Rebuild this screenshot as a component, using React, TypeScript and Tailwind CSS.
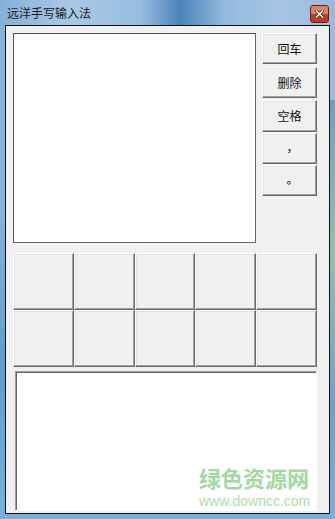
import React from "react";

const CELLS = Array.from({ length: 10 }, (_, i) => i);
const KEYS = ["回车", "删除", "空格", "，", "。"];

function RaisedButton({ label, className }: { label: string; className?: string }) {
  return (
    <div
      className={
        "flex items-center justify-center bg-[#f0f0f0] text-[12px] text-[#111] border border-t-[#fdfdfd] border-l-[#fdfdfd] border-r-[#696969] border-b-[#696969] shadow-[inset_-1px_-1px_0_#a0a0a0,inset_1px_1px_0_#e3e3e3] " +
        (className ?? "")
      }
    >
      {label}
    </div>
  );
}

export default function App() {
  return (
    <div
      className="relative isolate flex h-[519px] w-[335px] flex-col overflow-hidden bg-[#8db5da]"
      style={{ fontFamily: '"Noto Sans CJK SC", "Noto Sans", sans-serif' }}
    >
      {/* aero glass frame */}
      <div className="absolute inset-0 -z-10 flex">
        <div className="w-[140px] bg-linear-to-r from-[#86b0d6] via-[#a9c8e6] to-[#98bde0]" />
        <div className="w-[40px] bg-linear-to-r from-[#98bde0] to-[#4a84b8]" />
        <div className="w-[45px] bg-linear-to-r from-[#4a84b8] to-[#92bade]" />
        <div className="flex-1 bg-linear-to-r from-[#92bade] via-[#a8c6e4] to-[#98bbdd]" />
      </div>
      <div className="absolute inset-x-0 bottom-0 -z-10 h-[300px] bg-linear-to-b from-transparent via-[#5f9cc8] to-[#78b2da]" />
      <div className="absolute right-0 top-[100px] -z-10 h-[300px] w-[6px] bg-linear-to-b from-[#6aa0c8] via-[#8fc0a8] to-[#6aa3cc]" />

      {/* title bar */}
      <div className="flex h-[25px] shrink-0 items-center justify-between pl-[7px] pr-[6px]">
        <span className="text-[12px] leading-none text-[#1a1a1a]">远洋手写输入法</span>
        <div className="mt-[3px] flex h-[18px] w-[19px] flex-col overflow-hidden rounded-[3px] border border-[#5e2218] bg-[#c8402a]">
          <div className="h-[8px] bg-[#e08068]" />
          <div className="flex-1 bg-[#c33a22]" />
          <svg className="absolute ml-[4px] mt-[4px]" width="9" height="8" viewBox="0 0 9 8">
            <path d="M1.5 1 L7.5 7 M7.5 1 L1.5 7" stroke="#3a1a16" strokeWidth="3" strokeLinecap="square" />
            <path d="M1.5 1 L7.5 7 M7.5 1 L1.5 7" stroke="#ffffff" strokeWidth="1.6" strokeLinecap="square" />
          </svg>
        </div>
      </div>

      {/* client area */}
      <div className="mx-[5px] h-[489px] w-[325px] border border-[#111] bg-[#f0f0f0] pl-[7px] pt-[7px]">
        <div className="flex gap-[6px]">
          <div className="h-[210px] w-[243px] border border-[#646464] border-l-[#505050] border-t-[#505050] bg-white" />
          <div className="flex flex-col">
            <RaisedButton label={KEYS[0]} className="h-[31px] w-[55px]" />
            <RaisedButton label={KEYS[1]} className="mt-[3px] h-[31px] w-[55px]" />
            <RaisedButton label={KEYS[2]} className="mt-[2px] h-[32px] w-[55px]" />
            <RaisedButton label={KEYS[3]} className="mt-[1px] h-[31px] w-[55px] pb-[4px] pl-[6px]" />
            <RaisedButton label={KEYS[4]} className="mt-[1px] h-[31px] w-[55px] pb-[4px] pl-[6px]" />
          </div>
        </div>

        <div className="mt-[10px] grid w-[304px] grid-cols-5">
          {CELLS.map((i) => (
            <RaisedButton key={i} label="" className="h-[57px]" />
          ))}
        </div>

        <div className="relative ml-[2px] mt-[4px] h-[140px] w-[302px] border border-[#a0a0a0] border-b-[#fdfdfd] border-r-[#fdfdfd] bg-white shadow-[inset_1px_1px_0_#696969]">
          <div className="absolute left-[183px] top-[95px] flex flex-col items-start">
            <span className="text-[22px] font-bold leading-[20px] text-[#a3d89f]">绿色资源网</span>
            <span
              className="mt-[7px] text-[14px] leading-[14px] text-[#b0dcab]"
              style={{ fontFamily: '"Liberation Sans", Arial, sans-serif' }}
            >
              www.downcc.com
            </span>
          </div>
        </div>
      </div>
    </div>
  );
}
